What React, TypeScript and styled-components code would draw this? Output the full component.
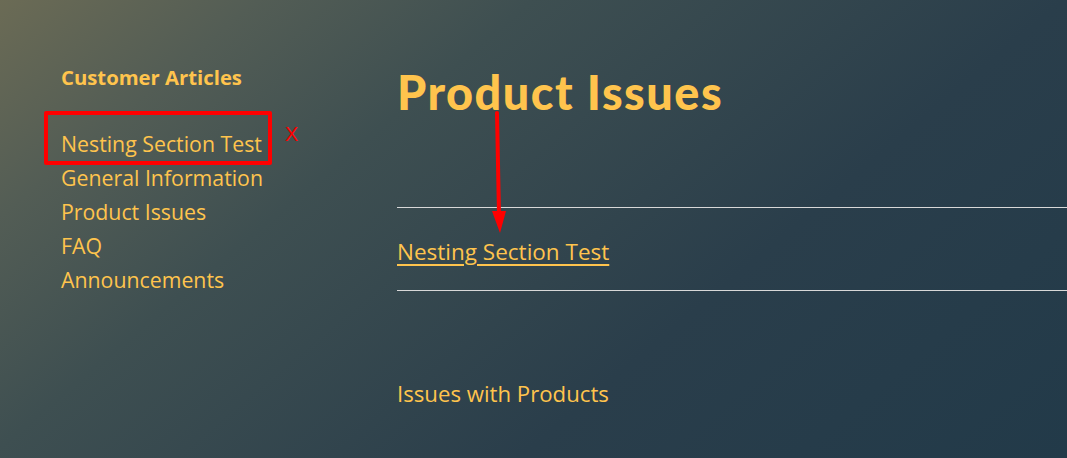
import styled, { createGlobalStyle } from "styled-components";

const GlobalStyle = createGlobalStyle`
  html, body {
    margin: 0;
    padding: 0;
    height: 100%;
  }
  body {
    font-family: "Open Sans", "Noto Sans", sans-serif;
    background: linear-gradient(140deg, #6b6b55 0%, #535d55 16%, #3e4f51 33%, #2a3e4b 66%, #223a49 100%);
    background-attachment: fixed;
    color: #ffc44d;
    overflow: hidden;
  }
`;

const NAV_ITEMS = [
  "Nesting Section Test",
  "General Information",
  "Product Issues",
  "FAQ",
  "Announcements",
];

const App = () => {
  return (
    <>
      <GlobalStyle />
      <Page>
        <Sidebar>
          <SideTitle>Customer Articles</SideTitle>
          <NavList>
            {NAV_ITEMS.map((item, i) => (
              <NavItem key={item} $marked={i === 0}>
                {item}
                {i === 0 && <Cross>X</Cross>}
              </NavItem>
            ))}
          </NavList>
        </Sidebar>
        <Main>
          <Heading>Product Issues</Heading>
          <Arrow width="20" height="125" viewBox="0 0 20 125">
            <line x1="8" y1="2" x2="10" y2="104" stroke="#ff0000" strokeWidth="4" strokeLinecap="round" />
            <polygon points="3,100 17,100 11,122" fill="#ff0000" />
          </Arrow>
          <SectionList>
            <SectionLink href="#">Nesting Section Test</SectionLink>
          </SectionList>
          <Description>Issues with Products</Description>
        </Main>
      </Page>
    </>
  );
};

const Page = styled.div`
  display: flex;
  min-height: 458px;
  padding-left: 61px;
  box-sizing: border-box;
`;

const Sidebar = styled.aside`
  width: 336px;
  flex-shrink: 0;
  padding-top: 63px;
`;

const SideTitle = styled.div`
  font-size: 20.3px;
  font-weight: 700;
  line-height: 28px;
`;

const NavList = styled.ul`
  list-style: none;
  margin: 0;
  padding: 0;
  margin-top: 36px;
`;

const NavItem = styled.li<{ $marked?: boolean }>`
  position: relative;
  font-size: 21.3px;
  line-height: 34px;
  width: max-content;

  ${({ $marked }) =>
    $marked &&
    `
    &::before {
      content: "";
      position: absolute;
      left: -17px;
      right: -10px;
      top: -16px;
      bottom: -4px;
      border: 4px solid #ff0000;
      border-radius: 2px;
    }
  `}
`;

const Cross = styled.span`
  position: absolute;
  left: calc(100% + 23px);
  top: -10px;
  color: #ff0000;
  font-family: "Liberation Sans", sans-serif;
  font-size: 20px;
`;

const Main = styled.main`
  position: relative;
  flex: 1;
  padding-top: 62px;
`;

const Heading = styled.h1`
  margin: 0;
  font-family: "Lato", sans-serif;
  font-weight: 900;
  font-size: 46.8px;
  letter-spacing: 1.5px;
  line-height: 60px;
`;

const Arrow = styled.svg`
  position: absolute;
  left: 92px;
  top: 111px;
`;

const SectionList = styled.div`
  margin-top: 85px;
  border-top: 1px solid #d8d8d8;
  border-bottom: 1px solid #d8d8d8;
  padding: 30px 0 24px;
`;

const SectionLink = styled.a`
  color: #ffc44d;
  font-size: 22.5px;
  line-height: 28px;
  text-decoration: underline;
  text-decoration-thickness: 1.5px;
  text-underline-offset: 4px;
`;

const Description = styled.p`
  margin: 89px 0 0;
  font-size: 22.2px;
  line-height: 28px;
`;

export default App;
